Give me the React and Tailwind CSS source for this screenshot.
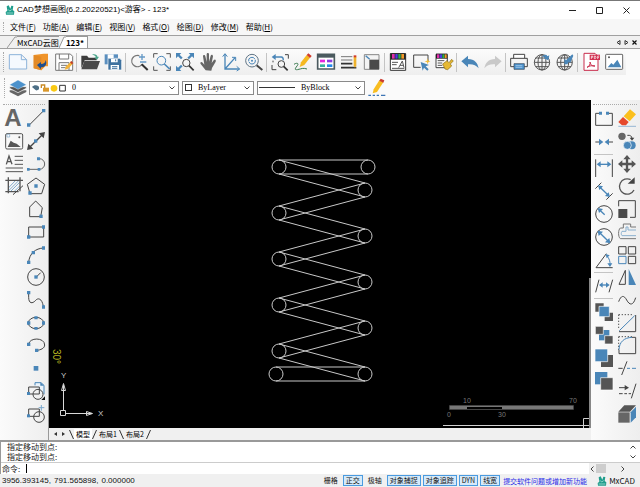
import { useState } from 'react';

const BLUE = '#4a86b8'
const DARK = '#555555'

const ICONS = {
    newFile: (
        <path d="M1 5h36l16 15v28H1zM37 5v15h16" fill="#f5f9fe" stroke="#8db3da" strokeWidth="3" />
    ),
    open: (
        <g>
            <path d="M5 6l30-4h13v38h-8L28 52 5 46z" fill="#f0942a" />
            <path d="M5 6l23 5v41L5 46z" fill="#e38a26" />
            <path d="M15 36l12-9v6c9 0 13-4 14-12 5 12 0 22-14 22v6z" fill="#1f4e8c" />
        </g>
    ),
    save: (
        <g>
            <path d="M2 3h44l7 7v42H2z" fill="#fff" stroke="#777" strokeWidth="3" />
            <path d="M13 3v15h28V3M12 52V29h30v23M18 37h18M18 44h14" fill="none" stroke="#777" strokeWidth="3" />
            <path d="M29 50l4-10 16-15 6 6-16 16z" fill="#f2b33a" />
            <path d="M45 28l4-4 6 6-4 4z" fill="#c0392b" />
        </g>
    ),
    folder: (
        <g>
            <path d="M1 8h17l5 6h24v8H11L1 46z" fill="#3c3c3c" />
            <path d="M10 24h47l-9 25H1z" fill="#4a4a4a" />
            <path d="M33 5c9-3 15 0 17 7l4-1-6 9-8-6 5-1c-2-5-6-7-12-8z" fill="#4aa58b" />
        </g>
    ),
    saveAll: (
        <g>
            <path d="M2 4h40v30H2z" fill="#5b8fbf" />
            <path d="M11 4h18v12H11z" fill="#fff" />
            <path d="M12 16h35l6 6v29H12z" fill="#3f729f" stroke="#fff" strokeWidth="2" />
            <path d="M21 17h20v11H21zM20 36h25v14H20z" fill="#fff" />
            <path d="M24 41h16M24 46h16M35 19v6" stroke="#3f729f" strokeWidth="3" />
        </g>
    ),
    zoomDynamic: (
        <g fill="none">
            <path d="M28 8A17 17 0 1 0 36 34" stroke="#777" strokeWidth="4" />
            <path d="M35 34l18 17" stroke="#333" strokeWidth="6" />
            <path d="M36 3v18M27 12h18M30 27h19" stroke="#6599c6" strokeWidth="4" />
        </g>
    ),
    zoomWindow: (
        <g fill="none">
            <path d="M2 14V2h12M40 2h12v12M2 40v12h12M40 52h12V40" stroke={DARK} strokeWidth="3" />
            <circle cx="25" cy="23" r="13" stroke={BLUE} strokeWidth="3" />
            <path d="M34 33l16 15" stroke={BLUE} strokeWidth="5" />
        </g>
    ),
    zoomExtents: (
        <g>
            <path d="M0 0h16l-5 5 9 9-5 5-9-9-6 6zM54 0v16l-6-6-9 9-5-5 9-9-5-5zM0 54V38l6 6 9-9 5 5-9 9 5 5z" fill={BLUE} />
            <circle cx="31" cy="30" r="11" fill="none" stroke="#444" strokeWidth="3" />
            <path d="M39 38l14 14" stroke="#333" strokeWidth="5" />
        </g>
    ),
    pan: (
        <path d="M20 52L5 33c-3-5 2-8 6-4l5 6-4-25c0-5 6-5 7 0l4 17V4c0-5 7-5 7 0v22l5-18c2-5 7-3 7 2l-4 20 6-8c4-5 8-1 6 4L39 45l-2 8z" fill="#666" />
    ),
    ucs: (
        <g fill="none" stroke={BLUE} strokeWidth="4">
            <path d="M9 3v45h43M9 48L40 13" />
            <path d="M2 11l7-9 7 9M44 40l9 8-9 6M30 13h11v11" strokeWidth="3" />
        </g>
    ),
    zoomCenter: (
        <g fill="none">
            <circle cx="21" cy="23" r="19" stroke="#5f7485" strokeWidth="3" />
            <path d="M11 25a10 10 0 0 1 19-6M31 21a10 10 0 0 1-19 6" stroke={BLUE} strokeWidth="3" />
            <circle cx="21" cy="23" r="3" fill={BLUE} />
            <path d="M35 37l17 14" stroke="#444" strokeWidth="6" />
        </g>
    ),
    zoomPrev: (
        <g fill="none">
            <path d="M10 12h21c5 0 6 4 6 10" stroke={BLUE} strokeWidth="4" />
            <path d="M2 12l12-9v18z" fill={BLUE} />
            <path d="M3 36v14h13M42 5h10v12M6 23v5" stroke="#444" strokeWidth="3" />
            <circle cx="31" cy="33" r="10" stroke="#444" strokeWidth="3" />
            <path d="M38 40l12 12" stroke="#333" strokeWidth="5" />
        </g>
    ),
    sketch: (
        <g>
            <path d="M0 34c9-6 16-3 9 5-6 8-8 12 1 11 14-3 16-6 29-2" fill="none" stroke="#3a7a4f" strokeWidth="3" />
            <path d="M17 42l4-14L38 6l10 8-17 22z" fill="#f5b921" />
            <path d="M38 6l5-5 10 8-5 6z" fill="#d13a2a" />
        </g>
    ),
    palette: (
        <g>
            <path d="M2 4h50v44H2z" fill="#fff" stroke="#4b5a5f" strokeWidth="5" />
            <path d="M2 4h50v10H2z" fill="#4b5a5f" />
            <path d="M9 20h15v8H9z" fill="#e429df" />
            <path d="M30 20h16v8H30z" fill="#8c3ce0" />
            <path d="M9 34h15v8H9z" fill="#37b29e" />
            <path d="M30 34h16v8H30z" fill="#2389e9" />
        </g>
    ),
    linetype: (
        <g>
            <path d="M3 11h34M3 21h34" stroke="#777" strokeWidth="3" />
            <path d="M3 32h34M3 44h46" stroke="#333" strokeWidth="5" />
            <path d="M41 11h8v27l-4 6-4-6z" fill="#efb22c" />
            <path d="M41 7h8v6h-8z" fill="#d13a2a" />
        </g>
    ),
    scaleBox: (
        <g>
            <path d="M4 5h44v44H4z" fill="#f4f4f4" stroke="#888" strokeWidth="3" />
            <path d="M19 20h29v29H19z" fill="#4a4a4a" />
            <path d="M8 8l12 11" stroke={BLUE} strokeWidth="4" />
        </g>
    ),
    textStyle: (
        <g>
            <path d="M4 2h46v50H4z" fill="#fff" stroke="#333" strokeWidth="3" />
            <path d="M4 1h46v19H4z" fill="#222" />
            <path d="M9 3h8v14H9z" fill="#e02fa8" />
            <path d="M19 3h7v14h-7z" fill="#4a3be0" />
            <path d="M28 3h7v14h-7z" fill="#28b04b" />
            <path d="M37 3h8v14h-8z" fill="#f0992a" />
            <path d="M9 28h18M9 35h14M9 46h37M29 44l11-20 5 20M33 37h10" fill="none" stroke="#555" strokeWidth="3" />
        </g>
    ),
    pick: (
        <g>
            <path d="M26 43H5V6h43v19" fill="none" stroke="#444" strokeWidth="3" />
            <path d="M26 27l25 9-10 4 9 9-4 4-10-9-4 9z" fill={BLUE} />
            <path d="M47 16l2 7 6 2-6 3-2 6-2-6-7-3 7-2z" fill="#f1bd3c" />
        </g>
    ),
    matchProp: (
        <g>
            <path d="M3 4h34v40H3z" fill="#fff" stroke="#444" strokeWidth="3" />
            <path d="M3 2h34v15H3z" fill="#222" />
            <path d="M6 4h7v11H6z" fill="#e02fa8" />
            <path d="M14 4h7v11h-7z" fill="#4a3be0" />
            <path d="M22 4h6v11h-6z" fill="#28b04b" />
            <path d="M29 4h6v11h-6z" fill="#f0992a" />
            <path d="M8 23h20M8 30h14M8 37h14" stroke="#555" strokeWidth="3" />
            <path d="M23 33l13-10 6 6 8-10 5 5-9 9 4 6-12 11-8-2z" fill="#e5b832" stroke="#8a6c18" strokeWidth="2" />
        </g>
    ),
    undo: (
        <path d="M1 25L21 8v10c20 0 29 12 32 28-8-10-17-13-32-12v9z" fill={BLUE} />
    ),
    redo: (
        <path d="M53 25L33 8v10C13 18 4 30 1 46c8-10 17-13 32-12v9z" fill="#c9c9c9" />
    ),
    print: (
        <g>
            <path d="M11 16V4h33v12" fill="#fff" stroke="#444" strokeWidth="3" />
            <path d="M2 16h50v25H2z" fill="#f4f4f4" stroke="#444" strokeWidth="3" />
            <path d="M12 32h31v17H12z" fill="#4c93cf" stroke="#345" strokeWidth="2" />
            <path d="M17 38h20M17 43h20" stroke="#bcd9f0" strokeWidth="2" />
        </g>
    ),
    globe: (
        <g fill="none" stroke="#555" strokeWidth="3">
            <circle cx="27" cy="28" r="23" />
            <path d="M27 5v46M4 28h46M8 15h38M8 41h38" />
            <ellipse cx="27" cy="28" rx="12" ry="23" />
            <path d="M26 14C30 5 40 2 43 10l6-3-3 15-14-6 5-3c-4-3-7-1-11 1z" fill={BLUE} stroke="none" />
        </g>
    ),
    globeDown: (
        <g fill="none" stroke="#555" strokeWidth="3">
            <circle cx="26" cy="28" r="23" />
            <path d="M26 5v46M3 28h46M7 15h38M7 41h38" />
            <ellipse cx="26" cy="28" rx="12" ry="23" />
            <path d="M25 34V17l5 5L49 4l3 4-9 21-5-2-4 7z" fill={BLUE} stroke="none" />
        </g>
    ),
    pdf: (
        <g>
            <path d="M6 1h33l9 9v42H6z" fill="#fff" stroke="#c92d4c" strokeWidth="3" />
            <path d="M23 5h31v16H23z" fill="#d22f50" />
            <path d="M28 18V9h4v4h-4M37 9v8h3l2-4-2-4zM47 18V9h5M47 13h4" fill="none" stroke="#fff" strokeWidth="2" />
            <path d="M15 43c8-4 10-9 9-16 3 10 6 13 15 12-10-2-15-1-24 4z" fill="none" stroke="#c92d4c" strokeWidth="3" />
        </g>
    ),
    picture: (
        <g>
            <rect x="2" y="4" width="51" height="45" rx="2" fill="#fff" stroke="#666" strokeWidth="3" />
            <path d="M8 43l11-13 6 5 12-15 12 23z" fill={BLUE} />
            <circle cx="12" cy="13" r="3" fill="#555" />
        </g>
    ),
    layers: (
        <g>
            <path d="M2 39l25 13 25-13v-5H2z" fill="#666" />
            <path d="M2 28l25 13 25-13v-5H2z" fill="#555" stroke="#fff" strokeWidth="2" />
            <path d="M2 17L27 3l25 14-25 14z" fill="#4c92cc" stroke="#fff" strokeWidth="1" />
        </g>
    ),
    pencil: (
        <g>
            <path d="M1 49h8M14 49h7M26 49h7M39 49h13" stroke="#3d75b5" strokeWidth="4" />
            <path d="M14 43l3-12L34 4l12 6-19 29z" fill="#f8bd20" />
            <path d="M34 5l4-6 11 5-3 7z" fill="#c93a30" />
        </g>
    ),

    // draw tools
    image: (
        <g>
            <rect x="2" y="5" width="51" height="46" rx="4" fill="none" stroke="#555" strokeWidth="3" />
            <path d="M8 45l9-19 9 6 9 3 12 10z" fill="#555" />
            <path d="M6 7h8v8H6z" fill="#fff" stroke="#7da6c9" strokeWidth="2" />
            <circle cx="43" cy="16" r="3" fill="#555" />
        </g>
    ),
    mtext: (
        <g fill="none" stroke="#555" strokeWidth="3">
            <path d="M4 28l8-25 9 25M7 20h11" strokeWidth="4" />
            <path d="M29 4h25M29 16h25M29 28h25M2 39h52M2 50h52" />
        </g>
    ),
    hatch: (
        <g fill="none">
            <path d="M10 33L32 10M10 42l34-34M16 44l28-28M27 44l17-17" stroke={BLUE} strokeWidth="2" />
            <path d="M10 1v48M45 1v42M1 10h53M1 44h40" stroke="#555" strokeWidth="4" />
            <path d="M24 53l30-27" stroke="#444" strokeWidth="3" />
        </g>
    ),
    line: (
        <g>
            <path d="M6 49L50 5" stroke="#444" strokeWidth="3" />
            <path d="M0 43h10v10H0zM45 0h10v10H45z" fill={BLUE} />
        </g>
    ),
    xline: (
        <g>
            <path d="M8 46L46 8" stroke="#444" strokeWidth="4" />
            <path d="M0 54l4-19 15 15zM54 0L35 4l15 15z" fill="#444" />
            <path d="M21 22h10v10H21z" fill={BLUE} />
        </g>
    ),
    pline: (
        <g>
            <path d="M4 43h33a16 16 0 0 0 0-32" fill="none" stroke="#666" strokeWidth="3" />
            <path d="M0 39h8v8H0zM32 39h8v8h-8zM30 7h9v9h-9z" fill={BLUE} />
        </g>
    ),
    polygon: (
        <g>
            <path d="M27 3l26 19-9 28H9L1 22z" fill="none" stroke="#444" strokeWidth="3" />
            <path d="M22 22h10v10H22zM4 43h10v10H4z" fill={BLUE} />
        </g>
    ),
    pentagon: (
        <g>
            <path d="M26 3l20 20-5 27H8V21z" fill="none" stroke="#444" strokeWidth="3" />
            <path d="M37 44h10v10H37z" fill={BLUE} />
        </g>
    ),
    rect: (
        <g>
            <path d="M5 12h45v30H5z" fill="none" stroke="#444" strokeWidth="3" />
            <path d="M0 37h10v10H0zM45 7h9v10h-9z" fill={BLUE} />
        </g>
    ),
    arc: (
        <g>
            <path d="M5 49C7 22 26 7 50 6" fill="none" stroke="#444" strokeWidth="3" />
            <path d="M0 44h10v10H0zM14 15h10v10H14zM45 1h9v10h-9z" fill={BLUE} />
        </g>
    ),
    circle: (
        <g>
            <circle cx="27" cy="27" r="25" fill="none" stroke="#444" strokeWidth="3" />
            <path d="M27 28l14-14" stroke="#444" strokeWidth="3" />
            <path d="M22 22h10v10H22z" fill={BLUE} />
        </g>
    ),
    spline: (
        <g>
            <path d="M5 5v14c0 20 12 19 20 10 8-10 20-7 24 17" fill="none" stroke="#444" strokeWidth="3" />
            <path d="M0 0h10v10H0zM45 43h9v10h-9z" fill={BLUE} />
        </g>
    ),
    ellipse: (
        <g>
            <ellipse cx="27" cy="27" rx="23" ry="17" fill="none" stroke="#444" strokeWidth="3" />
            <path d="M0 22h10v10H0zM45 22h9v10h-9zM22 7h10v9H22zM22 39h10v8H22z" fill={BLUE} />
        </g>
    ),
    ellipseArc: (
        <g>
            <path d="M5 25c1-21 48-22 48 2 0 10-12 15-24 16" fill="none" stroke="#444" strokeWidth="3" />
            <path d="M0 20h10v10H0zM24 38h10v10H24z" fill={BLUE} />
        </g>
    ),
    point: (
        <path d="M20 21h14v14H20z" fill={BLUE} />
    ),
    block: (
        <g fill="none">
            <path d="M24 10V2h18l9 8v27" fill="#eaf3fb" stroke={BLUE} strokeWidth="3" />
            <path d="M40 1l11 10H40z" fill={BLUE} />
            <path d="M5 15h32v21H5z" stroke="#444" strokeWidth="3" />
            <circle cx="33" cy="37" r="15" stroke="#444" strokeWidth="3" />
            <path d="M0 30h9v9H0z" fill={BLUE} />
            <path d="M54 43v11H43z" fill="#111" />
        </g>
    ),
    insertBlock: (
        <g fill="none">
            <path d="M5 12h32v22H5z" stroke="#444" strokeWidth="3" />
            <circle cx="36" cy="36" r="16" stroke="#444" strokeWidth="3" />
            <path d="M43 0v17M35 8h17" stroke="#78a6cc" strokeWidth="3" />
            <path d="M0 28h9v9H0z" fill={BLUE} />
        </g>
    ),

    // dimension and order tools
    breakBox: (
        <g>
            <path d="M13 10H2v36h50V10H41" fill="none" stroke="#444" strokeWidth="3" />
            <path d="M12 5h9v9h-9zM33 5h9v9h-9z" fill={BLUE} />
        </g>
    ),
    join: (
        <g>
            <path d="M1 27h12M41 27h13" stroke="#444" strokeWidth="3" />
            <path d="M12 17l13 10-13 10zM42 17L29 27l13 10z" fill={BLUE} />
        </g>
    ),
    dimLinear: (
        <g>
            <path d="M2 1v53M52 1v53" stroke="#444" strokeWidth="3" />
            <path d="M12 16h30" stroke={BLUE} strokeWidth="4" />
            <path d="M5 16l12-9v18zM49 16L37 7v18z" fill={BLUE} />
        </g>
    ),
    dimAligned: (
        <g>
            <path d="M1 20L19 2M34 53l19-19" stroke="#444" strokeWidth="3" />
            <path d="M14 15l26 25" stroke={BLUE} strokeWidth="4" />
            <path d="M9 10l15 3-11 11zM45 45l-15-3 11-11z" fill={BLUE} />
        </g>
    ),
    dimRadius: (
        <g>
            <circle cx="27" cy="27" r="25" fill="none" stroke="#444" strokeWidth="3" />
            <path d="M14 15l15 14" stroke={BLUE} strokeWidth="4" />
            <path d="M8 9l16 3-12 12z" fill={BLUE} />
        </g>
    ),
    dimDiameter: (
        <g>
            <circle cx="27" cy="27" r="25" fill="none" stroke="#444" strokeWidth="3" />
            <path d="M14 14l26 26" stroke={BLUE} strokeWidth="4" />
            <path d="M8 8l16 3-13 13zM46 46l-16-3 13-13z" fill={BLUE} />
        </g>
    ),
    dimAngle: (
        <g>
            <path d="M53 50H3L34 8" fill="none" stroke="#444" strokeWidth="3" />
            <path d="M36 15c7 8 10 17 9 27" fill="none" stroke={BLUE} strokeWidth="3" />
            <path d="M32 9l12 4-9 9zM45 48l-8-11h15z" fill={BLUE} />
        </g>
    ),
    dimOblique: (
        <g>
            <path d="M2 46L12 8M42 46L53 8" stroke="#444" strokeWidth="3" />
            <path d="M17 24h21" stroke={BLUE} strokeWidth="4" />
            <path d="M12 24l11-8v16zM44 24l-11-8v16z" fill={BLUE} />
        </g>
    ),
    orderA: (
        <g>
            <path d="M1 1h25v25H1zM29 29h25v25H29z" fill={DARK} />
            <path d="M12 10h31v31H12z" fill={BLUE} stroke="#fff" strokeWidth="2" />
        </g>
    ),
    orderB: (
        <g>
            <path d="M12 12h31v31H12z" fill={BLUE} />
            <path d="M1 1h24v24H1zM29 29h25v25H29z" fill={DARK} stroke="#fff" strokeWidth="2" />
        </g>
    ),
    orderC: (
        <g>
            <path d="M18 18h36v36H18z" fill={DARK} />
            <path d="M0 0h38v38H0z" fill={BLUE} stroke="#fff" strokeWidth="2" />
        </g>
    ),
    orderD: (
        <g>
            <path d="M0 0h37v37H0z" fill={BLUE} />
            <path d="M17 17h37v37H17z" fill={DARK} stroke="#fff" strokeWidth="2" />
        </g>
    ),

    // modify tools
    erase: (
        <g>
            <path d="M36 1l18 15-19 21-18-15z" fill="#fbbf1c" />
            <path d="M15 24l17 15-8 10H12L1 39z" fill="#e6492c" />
            <path d="M1 52h53" stroke="#6a9ac5" strokeWidth="2" />
        </g>
    ),
    copy: (
        <g>
            <circle cx="12" cy="13" r="11" fill="#666" />
            <path d="M28 10c9-1 13 2 14 9" fill="none" stroke="#444" strokeWidth="3" />
            <path d="M42 26l-7-9h14z" fill="#444" />
            <circle cx="41" cy="40" r="12" fill={BLUE} />
            <circle cx="28" cy="40" r="12" fill={BLUE} stroke="#fff" strokeWidth="2" />
        </g>
    ),
    move: (
        <g>
            <path d="M27 8v38M8 27h38" stroke="#555" strokeWidth="7" />
            <path d="M27 0l11 13H16zM27 54L16 41h22zM0 27l13-11v22zM54 27L41 38V16z" fill="#555" />
        </g>
    ),
    rotate: (
        <g>
            <path d="M38 8A23 23 0 1 0 48 39" fill="none" stroke="#555" strokeWidth="4" />
            <path d="M50 1v19H29z" fill="#444" />
        </g>
    ),
    scale: (
        <g>
            <path d="M2 19V2h50v50H36" fill="none" stroke="#444" strokeWidth="3" />
            <path d="M1 27h27v27H1z" fill="#4a4a4a" />
        </g>
    ),
    offset: (
        <g fill="none" strokeWidth="3">
            <path d="M54 12H38V3H16v12H7C0 20 0 42 7 47h47" stroke="#777" />
            <path d="M54 21H30v-9h-6v13H12c-3 4-3 10 0 13h42" stroke="#8ab0cf" />
        </g>
    ),
    array: (
        <g fill="none" strokeWidth="3">
            <path d="M2 2h22v22H2zM31 2h22v22H31zM31 31h22v22H31z" stroke="#444" />
            <path d="M2 31h22v22H2z" stroke={BLUE} />
        </g>
    ),
    mirror: (
        <g>
            <path d="M22 7v42H3z" fill="none" stroke="#444" strokeWidth="3" />
            <path d="M32 3v48h22z" fill={BLUE} />
        </g>
    ),
    wave: (
        <path d="M2 32c7-20 16-20 24-5 9 17 20 17 27-7" fill="none" stroke="#444" strokeWidth="3" />
    ),
    chamfer: (
        <g fill="none" strokeWidth="3">
            <path d="M2 2h40M2 2v43" stroke="#555" strokeDasharray="4 5" />
            <path d="M53 3v50H3" stroke="#444" />
            <path d="M4 50L50 5" stroke={BLUE} />
        </g>
    ),
    fillet: (
        <g fill="none" strokeWidth="3">
            <path d="M2 2h40M2 2v40" stroke="#555" strokeDasharray="4 5" />
            <path d="M41 4h12v49H3V42" stroke="#444" />
            <path d="M3 41C4 18 18 5 42 4" stroke={BLUE} />
        </g>
    ),
    trim: (
        <g strokeWidth="3">
            <path d="M1 28h13M11 48L27 7" stroke="#444" />
            <path d="M27 28h9M42 28h12" stroke={BLUE} />
        </g>
    ),
    extend: (
        <g strokeWidth="3">
            <path d="M3 17h20M3 35h11M19 35h8M32 35h7M40 49L54 5" stroke="#444" />
            <path d="M20 9l13 8-13 8z" fill="#444" />
        </g>
    ),
    box3d: (
        <g>
            <path d="M1 20L19 1h35L36 20z" fill="#555" />
            <path d="M1 22h34v31H1z" fill="#666" />
            <path d="M38 22L54 5v32L38 53z" fill={BLUE} />
        </g>
    ),
}

const MAIN_TOOLS = [
    ['newFile', 'open', 'save'],
    ['folder', 'saveAll'],
    ['zoomDynamic', 'zoomWindow', 'zoomExtents', 'pan', 'ucs', 'zoomCenter'],
    ['zoomPrev', 'sketch', 'palette', 'linetype', 'scaleBox'],
    ['textStyle', 'pick', 'matchProp'],
    ['undo', 'redo'],
    ['print', 'globe', 'globeDown'],
    ['pdf', 'picture'],
]

const DRAW_TOOLS = ['line', 'xline', 'pline', 'polygon', 'pentagon', 'rect', 'arc', 'circle', 'spline', 'ellipse', 'ellipseArc', 'point', 'block', 'insertBlock']
const DIM_TOOLS = [
    ['breakBox', 'join'],
    ['dimLinear', 'dimAligned', 'dimRadius', 'dimDiameter', 'dimAngle'],
    ['dimOblique'],
    ['orderA', 'orderB', 'orderC', 'orderD'],
]
const MODIFY_TOOLS = ['erase', 'copy', 'move', 'rotate', 'scale', 'offset', 'array', 'mirror', 'wave', 'chamfer', 'fillet', 'trim', 'extend', 'box3d']

const MENUS = [
    ['文件', 'F'],
    ['功能', 'A'],
    ['编辑', 'E'],
    ['视图', 'V'],
    ['格式', 'O'],
    ['绘图', 'D'],
    ['修改', 'M'],
    ['帮助', 'H'],
]

function Icon({ name }) {
    return (
        <svg className="size-[18px] shrink-0 overflow-visible" viewBox="0 0 54 54" aria-hidden="true">
            {ICONS[name]}
        </svg>
    )
}

function ToolButton({ name, height = 'h-[23px]' }) {
    return (
        <button aria-label={name} className={`flex w-[23px] shrink-0 items-center justify-center hover:bg-sky-100 ${height}`}>
            <Icon name={name} />
        </button>
    )
}

function Logo() {
    return (
        <svg className="size-[10px] shrink-0" viewBox="0 0 30 30" aria-hidden="true">
            <path d="M5 4l6-3 5 10 3-9 6 1-2 12 5 4-1 10H3l-1-8 5-4z" fill="#1f9d8c" />
            <path d="M9 13l5 5 6-4M5 24h20" fill="none" stroke="#c8efe6" strokeWidth="2" />
        </svg>
    )
}

function Chevron() {
    return (
        <svg className="w-[6px] h-[4px] shrink-0" viewBox="0 0 12 8" aria-hidden="true">
            <path d="M1 1l5 5 5-5" fill="none" stroke="#444" strokeWidth="2" />
        </svg>
    )
}

function Combo({ label, value, width, children }) {
    return (
        <div className={`flex h-[14px] items-center gap-[3px] border border-[#8a8a8a] bg-white pr-[3px] ${width}`}>
            {children}
            <select aria-label={label} className="min-w-0 flex-1 appearance-none bg-transparent px-[3px] font-['Liberation_Serif',serif] text-[8px] leading-[10px] text-black outline-none">
                <option>{value}</option>
            </select>
            <Chevron />
        </div>
    )
}

function TitleBar() {
    return (
        <header className="flex h-[19px] shrink-0 items-center border-t border-[#777] bg-white pl-[5px]">
            <Logo />
            <h1 className="ml-[2px] flex-1 font-['Liberation_Sans','Noto_Sans_CJK_SC',sans-serif] text-[8px] leading-[12px] text-black">CAD梦想画图(6.2.20220521)&lt;游客&gt; - 123*</h1>
            <div className="flex">
                <button aria-label="最小化" className="flex w-[27px] justify-center">
                    <svg className="size-[7px]" viewBox="0 0 7 7"><path d="M0 3.5h7" stroke="#222" /></svg>
                </button>
                <button aria-label="最大化" className="flex w-[27px] justify-center">
                    <svg className="size-[7px]" viewBox="0 0 7 7"><path d="M.5.5h6v6h-6z" fill="none" stroke="#222" /></svg>
                </button>
                <button aria-label="关闭" className="flex w-[27px] justify-center">
                    <svg className="size-[7px]" viewBox="0 0 7 7"><path d="M.5.5l6 6M6.5.5l-6 6" stroke="#222" /></svg>
                </button>
            </div>
        </header>
    )
}

function MenuBar() {
    return (
        <nav className="flex h-[16px] shrink-0 items-center bg-[#f7f7f7] pl-[3px]">
            <span className="mr-[6px] h-[10px] border-l border-dotted border-[#aaa]" />
            <div className="flex gap-[7px]">
                {MENUS.map(([name, key]) => (
                    <button key={key} className="text-[8px] leading-[12px] text-black">
                        {name}(<span className="underline">{key}</span>)
                    </button>
                ))}
            </div>
        </nav>
    )
}

function FileTabs() {
    return (
        <div className="flex h-[14px] shrink-0 items-stretch border-y border-[#a0a0a0] bg-[#f0f0f0]">
            <div className="flex flex-1 items-stretch pl-[7px]">
                <svg className="h-full w-[10px]" viewBox="0 0 10 12" preserveAspectRatio="none">
                    <path d="M0 12L8 1h2" fill="none" stroke="#999" />
                </svg>
                <button className="border-t border-[#999] text-[8px] leading-[11px] text-black">MxCAD云图</button>
                <svg className="h-full w-[7px]" viewBox="0 0 7 12" preserveAspectRatio="none">
                    <path d="M0 12L5 1h2v11z" fill="#fff" />
                    <path d="M0 12L5 1h2" fill="none" stroke="#999" />
                </svg>
                <button className="border-t border-r border-[#999] bg-white pr-[3px] text-[8px] leading-[11px] font-bold text-black">123*</button>
            </div>
            <div className="flex items-center gap-[3px] pr-[3px]">
                <button aria-label="上一个"><svg className="size-[5px]" viewBox="0 0 5 5"><path d="M4 .5v4L1 2.5z" fill="none" stroke="#333" /></svg></button>
                <button aria-label="下一个"><svg className="size-[5px]" viewBox="0 0 5 5"><path d="M1 .5v4l3-2z" fill="none" stroke="#333" /></svg></button>
                <button aria-label="关闭标签"><svg className="size-[5px]" viewBox="0 0 5 5"><path d="M.5.5l4 4M4.500.5l-4 4" stroke="#111" strokeWidth="1.200" /></svg></button>
            </div>
        </div>
    )
}

function MainToolbar() {
    return (
        <div className="flex h-[26px] shrink-0 items-center bg-[#fafafa]">
            <div className="flex h-[25px] items-center bg-linear-to-b from-[#fbfbfb] to-[#eeeeee] pl-[3px] pr-px">
                <span className="mr-[2px] h-[20px] border-l border-dotted border-[#aaa]" />
                {MAIN_TOOLS.map((group, i) => (
                    <div key={i} className="flex items-center">
                        {i > 0 && <span className="mx-px h-[19px] w-px bg-[#c4c4c4]" />}
                        {group.map((name) => <ToolButton key={name} name={name} />)}
                    </div>
                ))}
            </div>
        </div>
    )
}

function LayerToolbar() {
    return (
        <div className="flex h-[25px] shrink-0 items-center bg-[#fafafa] pl-[4px]">
            <span className="mr-px h-[20px] border-l border-dotted border-[#aaa]" />
            <ToolButton name="layers" />
            <Combo label="图层" value="0" width="w-[150px]">
                <svg className="ml-[2px] h-[8px] w-[34px] shrink-0" viewBox="0 0 102 24" aria-hidden="true">
                    <path d="M0 9c6-7 14-7 21-1v8c-6 5-10 4-13 0z" fill="#4d6f86" />
                    <path d="M28 12V3h10v9" fill="none" stroke="#c98a24" strokeWidth="4" />
                    <path d="M33 11h18v12H33z" fill="#d9982c" />
                    <circle cx="66" cy="13" r="10" fill="#f9c812" />
                    <path d="M83 4h17v17H83z" fill="#fff" stroke="#333" strokeWidth="3" />
                </svg>
            </Combo>
            <div className="mx-[3px]">
                <Combo label="颜色" value="ByLayer" width="w-[72px]">
                    <span className="ml-[2px] size-[7px] shrink-0 border border-[#333] bg-white" />
                </Combo>
            </div>
            <Combo label="线型" value="ByBlock" width="w-[108px]">
                <span className="ml-px h-px w-[36px] shrink-0 bg-[#333]" />
            </Combo>
            <ToolButton name="pencil" />
        </div>
    )
}

function LeftTools() {
    return (
        <aside className="flex w-[48px] shrink-0 flex-col bg-linear-to-r from-[#fbfbfb] to-[#eeeeee] px-[2px] pt-[4px] pb-[15px]">
            <div className="mx-px mb-[2px] border-t border-dotted border-[#aaa]" />
            <div className="grid flex-1 grid-flow-col grid-cols-2 grid-rows-14 items-center">
                <button aria-label="文字" className="h-[22px] text-[24px] leading-[22px] font-bold text-[#666] font-['Liberation_Sans',sans-serif]">A</button>
                {['image', 'mtext', 'hatch'].map((name) => <ToolButton key={name} name={name} height="h-[22px]" />)}
                <div className="col-start-2 row-span-14 grid h-full grid-rows-14 items-center">
                    {DRAW_TOOLS.map((name) => <ToolButton key={name} name={name} height="h-[22px]" />)}
                </div>
            </div>
        </aside>
    )
}

function RightTools() {
    return (
        <aside className="flex w-[49px] shrink-0 flex-col bg-linear-to-r from-[#fbfbfb] to-[#eeeeee] pt-[4px] pr-[2px] pb-[15px] pl-px">
            <div className="mx-px mb-[2px] border-t border-dotted border-[#aaa]" />
            <div className="flex flex-1">
                <div className="flex flex-col">
                    {DIM_TOOLS.map((group, i) => (
                        <div key={i}>
                            {i > 0 && <hr className="mx-[2px] my-px border-[#c4c4c4]" />}
                            {group.map((name) => <ToolButton key={name} name={name} />)}
                        </div>
                    ))}
                </div>
                <div className="grid grid-rows-14 items-center">
                    {MODIFY_TOOLS.map((name) => <ToolButton key={name} name={name} height="h-[22px]" />)}
                </div>
            </div>
        </aside>
    )
}

const LEFT_X = 230
const RIGHT_X = 316
const R = 7

// coil centers, from top to bottom
const COILS = [
    [LEFT_X, 67],
    [RIGHT_X, 90],
    [LEFT_X, 113],
    [RIGHT_X, 136],
    [LEFT_X, 159],
    [RIGHT_X, 182],
    [LEFT_X, 205],
    [RIGHT_X, 228],
    [LEFT_X, 251],
    [RIGHT_X, 274],
]

function Drawing() {
    const rods = COILS.slice(1).map((end, i) => [COILS[i], end])
    rods.push([[LEFT_X, 67], [319, 67]])
    rods.push([[227, 274], [RIGHT_X, 274]])

    return (
        <svg className="h-full w-full font-['Liberation_Sans',sans-serif]" viewBox="0 0 542 328" preserveAspectRatio="none">
            <g fill="none" stroke="#c8c8c8">
                {[...COILS, [319, 67], [227, 274]].map(([x, y]) => (
                    <circle key={`${x}-${y}`} cx={x} cy={y} r={R} />
                ))}
                {rods.map(([a, b], i) => (
                    <path key={i} d={`M${a[0]} ${a[1] - R}L${b[0]} ${b[1] - R}M${a[0]} ${a[1] + R}L${b[0]} ${b[1] + R}`} />
                ))}
            </g>

            <text x="4" y="249" fontSize="10" fill="#b5b520" transform="rotate(90 4 249)">30°</text>

            <g fill="none" stroke="#d8d8d8">
                <path d="M11.500 310.500h5v5h-5zM14.500 310V285M17 313.500h26" />
                <path d="M12.500 290.500l2-7 2 7zM37.500 311.500l6 2-6 2z" />
            </g>
            <g fontSize="8" fill="#c8c8c8">
                <text x="12" y="278">Y</text>
                <text x="49" y="316">X</text>
            </g>

            <g fill="#777">
                <path d="M400 306h18v3h-18zM418 305h35v2h-35zM453 306h71v3h-71z" />
                <path d="M400.500 305.500h124v4h-124z" fill="none" stroke="#444" />
                <g fontSize="7">
                    <text x="414" y="303">10</text>
                    <text x="520" y="303">70</text>
                    <text x="398" y="317">0</text>
                    <text x="449" y="317">30</text>
                </g>
            </g>
            <path d="M394 325.500h148M534.500 328v-9.500h8" fill="none" stroke="#d0d0d0" />
            <path d="M541 178v150" stroke="#888" strokeWidth="2" />
        </svg>
    )
}

function LayoutTabs({ active, onSelect }) {
    return (
        <div className="flex h-[12px] shrink-0 items-center bg-[#f0f0f0] pl-[3px]">
            <button aria-label="向左" className="flex w-[7px] justify-center"><svg className="size-[4px]" viewBox="0 0 4 4"><path d="M3 0v4L0 2z" fill="#333" /></svg></button>
            <button aria-label="向右" className="mr-[3px] flex w-[7px] justify-center"><svg className="size-[4px]" viewBox="0 0 4 4"><path d="M1 0v4l3-2z" fill="#333" /></svg></button>
            <svg className="h-[9px] w-[5px]" viewBox="0 0 5 9"><path d="M.5 0l4 9" stroke="#333" /></svg>
            {['模型', '布局1', '布局2'].map((name, i) => (
                <div key={name} className="flex items-center">
                    <button onClick={() => onSelect(name)} className={`px-[2px] text-[7px] leading-[10px] text-black ${active === name ? 'bg-white' : ''}`}>{name}</button>
                    <svg className="h-[9px] w-[5px]" viewBox="0 0 5 9">
                        <path d={i === 1 ? 'M.5 0l4 9' : 'M4.500 0l-4 9'} stroke="#333" />
                    </svg>
                </div>
            ))}
        </div>
    )
}

function CommandPanel() {
    const [command, setCommand] = useState('')

    return (
        <section className="shrink-0 border-t-2 border-l border-[#999] bg-white text-[8px] leading-[10px] text-[#222]">
            <div className="flex justify-between pr-[4px]">
                <div className="pl-[6px]">
                    <p>指定移动到点:</p>
                    <p>指定移动到点:</p>
                </div>
                <div className="flex w-[6px] flex-col items-center justify-around">
                    <span className="rotate-180"><Chevron /></span>
                    <Chevron />
                </div>
            </div>
            <div className="flex h-[12px] items-center border-t border-[#ccc]">
                <label htmlFor="command" className="pl-px">命令:</label>
                <span className="ml-[6px] h-[9px] w-px bg-black" />
                <input id="command" value={command} onChange={(e) => setCommand(e.target.value)} className="min-w-0 flex-1 bg-transparent outline-none" />
                <div className="flex h-full w-[51px] items-center bg-[#f0f0f0]">
                    <span className="rotate-90"><Chevron /></span>
                    <span className="ml-px h-[9px] w-[10px] bg-[#cdcdcd]" />
                    <span className="ml-[14px] -rotate-90"><Chevron /></span>
                </div>
            </div>
        </section>
    )
}

const MODES = [
    ['栅格', false],
    ['正交', true],
    ['极轴', false],
    ['对象捕捉', true],
    ['对象追踪', true],
    ['DYN', true],
    ['线宽', true],
]

function StatusBar() {
    const [modes, setModes] = useState(Object.fromEntries(MODES))

    return (
        <footer className="flex h-[13px] shrink-0 items-center bg-[#f0f0f0] pr-[5px] pl-[2px] text-[8px] leading-[10px] text-[#111]">
            <span className="flex flex-1 gap-[3px] font-['Liberation_Sans',sans-serif]">
                <span>3956.393145,</span>
                <span>791.565898,</span>
                <span>0.000000</span>
            </span>
            <div className="flex gap-[2px]">
                {MODES.map(([name]) => (
                    <button
                        key={name}
                        onClick={() => setModes({ ...modes, [name]: !modes[name] })}
                        className={`border px-[2px] text-[7px] leading-[9px] whitespace-nowrap ${modes[name] ? 'border-[#4a9be0] bg-[#d5e9f9]' : 'border-transparent'}`}
                    >
                        {name}
                    </button>
                ))}
            </div>
            <a href="#feedback" className="mr-[10px] ml-[3px] text-[7px] whitespace-nowrap text-[#2a2ae8]">提交软件问题或增加新功能</a>
            <Logo />
            <span className="ml-[2px]">MxCAD</span>
        </footer>
    )
}

export default function App() {
    const [layout, setLayout] = useState('模型')

    return (
        <div className="flex h-screen flex-col overflow-hidden bg-[#f0f0f0] font-['Noto_Sans_CJK_SC',sans-serif]">
            <TitleBar />
            <MenuBar />
            <FileTabs />
            <MainToolbar />
            <LayerToolbar />
            <div className="flex min-h-0 flex-1">
                <LeftTools />
                <main className="flex min-w-0 flex-1 flex-col border-l border-[#999]">
                    <div className="min-h-0 flex-1 bg-black">
                        <Drawing />
                    </div>
                    <LayoutTabs active={layout} onSelect={setLayout} />
                </main>
                <RightTools />
            </div>
            <CommandPanel />
            <StatusBar />
        </div>
    )
}
